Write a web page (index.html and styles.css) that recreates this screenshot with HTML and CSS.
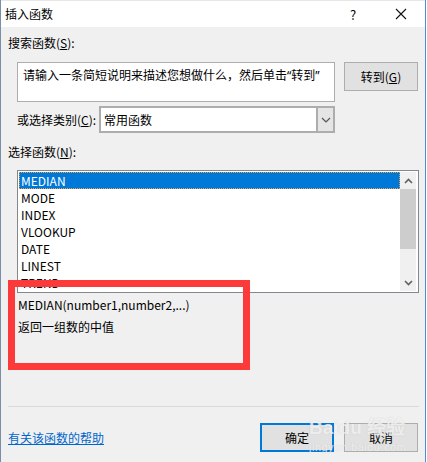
FILE: index.html
```html
<!DOCTYPE html>
<html lang="zh-CN">
<head>
    <meta charset="UTF-8">
    <title>插入函数</title>
    <link rel="stylesheet" href="styles.css">
</head>
<body>
    <div class="window">
        <div class="titlebar">
            <span class="title">插入函数</span>
            <span class="help">?</span>
            <svg class="close" width="12" height="12" viewBox="0 0 12 12">
                <path d="M1 1 L11 11 M11 1 L1 11" stroke="#111" stroke-width="1.1" fill="none"/>
            </svg>
        </div>
        <div class="content">
            <div class="label">搜索函数(<u>S</u>):</div>
            <div class="search-row">
                <div class="search-box">请输入一条简短说明来描述您想做什么，然后单击<span class="q">“</span>转到<span class="q">”</span></div>
                <button class="btn">转到(<u>G</u>)</button>
            </div>
            <div class="category-row">
                <span class="cat-label">或选择类别(<u>C</u>):</span>
                <div class="combo">
                    <span class="combo-text">常用函数</span>
                    <span class="combo-btn">
                        <svg width="10" height="6" viewBox="0 0 10 6"><path d="M1 1 L5 5 L9 1" stroke="#555" stroke-width="1.2" fill="none"/></svg>
                    </span>
                </div>
            </div>
            <div class="label label-list">选择函数(<u>N</u>):</div>
            <div class="listbox">
                <ul class="items">
                    <li class="selected">MEDIAN</li>
                    <li>MODE</li>
                    <li>INDEX</li>
                    <li>VLOOKUP</li>
                    <li>DATE</li>
                    <li>LINEST</li>
                    <li>TREND</li>
                </ul>
                <div class="scrollbar">
                    <div class="arrow">
                        <svg width="9" height="6" viewBox="0 0 9 6"><path d="M1 5 L4.5 1.5 L8 5" stroke="#606060" stroke-width="1.6" fill="none"/></svg>
                    </div>
                    <div class="thumb"></div>
                    <div class="track"></div>
                    <div class="arrow">
                        <svg width="9" height="6" viewBox="0 0 9 6"><path d="M1 1 L4.5 4.5 L8 1" stroke="#606060" stroke-width="1.6" fill="none"/></svg>
                    </div>
                </div>
            </div>
            <div class="desc">
                <p>MEDIAN(number1,number2,...)</p>
                <p>返回一组数的中值</p>
            </div>
            <div class="separator"></div>
            <div class="footer">
                <a class="help-link" href="#">有关该函数的帮助</a>
                <div class="buttons">
                    <button class="btn btn-default">确定</button>
                    <button class="btn">取消</button>
                </div>
            </div>
            <div class="highlight"></div>
            <div class="watermark">
                <span class="wm-logo">Bai<b>du</b> 经验</span>
                <span class="wm-url">jingyan.baidu.com</span>
            </div>
        </div>
    </div>
</body>
</html>
```

FILE: styles.css
```css
* {
    box-sizing: border-box;
}
body {
    margin: 0;
    background: #ffffff;
    font-family: "Noto Sans CJK SC", "Noto Sans", sans-serif;
    font-size: 12px;
    color: #000;
}
.window {
    width: 426px;
    height: 462px;
    border-left: 1px solid #7a8ea8;
    border-right: 1px solid #4a90d9;
    background: #f0f0f0;
    display: flex;
    flex-direction: column;
}
.titlebar {
    height: 27px;
    background: #ffffff;
    display: flex;
    align-items: center;
    padding-left: 4px;
    border-top: 1px solid #e8e8e8;
}
.title {
    flex: 1;
    line-height: 16px;
}
.help {
    font-size: 13px;
    width: 12px;
    margin-right: 33px;
}
.close {
    margin-right: 18px;
}
.content {
    position: relative;
    flex: 1;
    padding: 8px 7px 0 7px;
}
.label {
    line-height: 16px;
}
.search-row {
    display: flex;
    align-items: flex-start;
    margin-top: 11px;
    padding-left: 9px;
}
.search-box {
    width: 318px;
    height: 40px;
    background: #fff;
    border: 1px solid #adadad;
    padding: 4px 0 0 5px;
    line-height: 16px;
    white-space: nowrap;
    overflow: hidden;
}
.search-box .q {
    font-family: "Noto Sans", sans-serif;
}
.btn {
    font-family: inherit;
    font-size: 12px;
    width: 74px;
    height: 29px;
    background: #e1e1e1;
    border: 1px solid #adadad;
    padding: 0;
    margin-left: 9px;
}
.btn-default {
    border: 2px solid #0078d7;
}
.category-row {
    display: flex;
    align-items: center;
    margin-top: 4px;
    padding-left: 9px;
}
.cat-label {
    width: 82px;
}
.combo {
    width: 236px;
    height: 27px;
    display: flex;
    background: #fff;
    border: 2px solid #adadad;
}
.combo-text {
    flex: 1;
    padding-left: 3px;
    line-height: 23px;
}
.combo-btn {
    width: 17px;
    background: #e5e5e5;
    border-left: 2px solid #adadad;
    display: flex;
    align-items: center;
    justify-content: center;
}
.label-list {
    margin-top: 11px;
}
.listbox {
    margin: 10px 0 0 9px;
    width: 402px;
    height: 123px;
    background: #fff;
    border: 1px solid #828790;
    padding: 1px;
    display: flex;
    overflow: hidden;
}
.items {
    list-style: none;
    margin: 0;
    padding: 0;
    flex: 1;
}
.items li {
    height: 17px;
    line-height: 17px;
    padding-left: 2px;
}
.items li.selected {
    background: #0078d7;
    color: #fff;
    outline: 1px dotted #e8a040;
    outline-offset: -1px;
}
.scrollbar {
    width: 16px;
    background: #f0f0f0;
    display: flex;
    flex-direction: column;
    margin-right: 1px;
}
.arrow {
    height: 17px;
    display: flex;
    align-items: center;
    justify-content: center;
}
.thumb {
    height: 60px;
    background: #cdcdcd;
}
.track {
    flex: 1;
}
.desc {
    padding-left: 10px;
    margin-top: 4px;
}
.desc p {
    margin: 0;
    line-height: 16px;
}
.desc p + p {
    margin-top: 6px;
}
.separator {
    height: 1px;
    background: #d9d9d9;
    margin-top: 71px;
    width: 411px;
}
.footer {
    display: flex;
    align-items: center;
    margin-top: 16px;
}
.help-link {
    flex: 1;
    color: #0066cc;
    line-height: 16px;
}
.buttons {
    display: flex;
}
.buttons .btn + .btn {
    margin-left: 10px;
}
.highlight {
    position: absolute;
    left: 7px;
    top: 253px;
    width: 242px;
    height: 90px;
    border: 7px solid #fd3a3a;
}
.watermark {
    position: absolute;
    left: 308px;
    top: 391px;
    display: flex;
    flex-direction: column;
    color: rgba(255, 255, 255, 0.7);
    text-shadow: 0 0 1px rgba(170, 170, 170, 0.5);
    pointer-events: none;
}
.wm-logo {
    font-family: "Liberation Sans", sans-serif;
    font-size: 19px;
    font-weight: bold;
    line-height: 20px;
}
.wm-url {
    font-family: "Liberation Sans", sans-serif;
    font-size: 11px;
    margin-top: 3px;
    letter-spacing: 0.5px;
}
```
